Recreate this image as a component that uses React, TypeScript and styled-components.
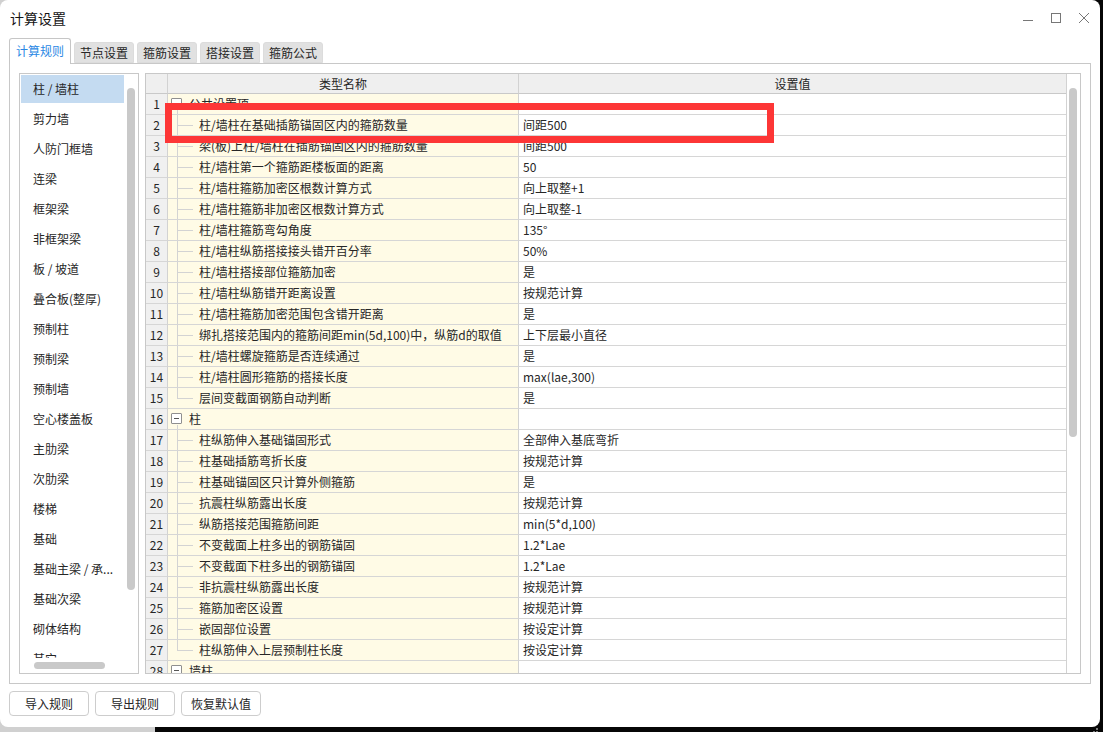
import React from "react";
import styled, { createGlobalStyle } from "styled-components";

const FONT = `"Microsoft YaHei", "Noto Sans CJK SC", "Noto Sans", sans-serif`;
const TEXT = "#262626";

const Global = createGlobalStyle`
  html, body { margin: 0; padding: 0; }
  body {
    width: 1103px;
    height: 732px;
    overflow: hidden;
    font-family: ${FONT};
    color: ${TEXT};
    background: linear-gradient(to right, #d0d0d0 0, #d0d0d0 155px, #060606 155px);
  }
`;

const Dialog = styled.div`
  position: relative;
  width: 1100px;
  height: 727px;
  background: #fff;
  border-radius: 8px;
  display: flex;
  flex-direction: column;
  box-sizing: border-box;
`;

const TitleBar = styled.div`
  height: 38px;
  display: flex;
  align-items: center;
  padding: 0 2px 2px 10px;
  box-sizing: border-box;
`;

const Title = styled.div`
  flex: 1;
  font-size: 14px;
  color: #141414;
  line-height: 20px;
`;

const WinButton = styled.div`
  width: 28px;
  height: 24px;
  display: flex;
  align-items: center;
  justify-content: center;
  color: #777;
`;

const TabRow = styled.div`
  height: 25px;
  display: flex;
  align-items: flex-end;
  gap: 3px;
  padding-left: 9px;
  position: relative;
  z-index: 1;
`;

const Tab = styled.div<{ $active?: boolean }>`
  box-sizing: border-box;
  width: ${(p) => (p.$active ? 62 : 60)}px;
  height: ${(p) => (p.$active ? 26 : 21)}px;
  margin-bottom: ${(p) => (p.$active ? -1 : 0)}px;
  display: flex;
  align-items: center;
  justify-content: center;
  font-size: 12px;
  line-height: 16px;
  border: 1px solid ${(p) => (p.$active ? "#c6c6c6" : "#dcdcdc")};
  border-bottom: ${(p) => (p.$active ? "none" : "1px solid #dcdcdc")};
  border-radius: 3px 3px 0 0;
  background: ${(p) => (p.$active ? "#fff" : "#e1e1e1")};
  color: ${(p) => (p.$active ? "#2a88e4" : TEXT)};
  padding-bottom: ${(p) => (p.$active ? 2 : 0)}px;
`;

const Panel = styled.div`
  margin: 0 9px;
  height: 621px;
  box-sizing: border-box;
  border: 1px solid #c8c8c8;
  padding: 9px;
  display: flex;
  gap: 6px;
`;

const ListBox = styled.div`
  width: 120px;
  box-sizing: border-box;
  border: 1px solid #c8c8c8;
  display: grid;
  grid-template-columns: 1fr 13px;
  grid-template-rows: 1fr 15px;
`;

const ListItems = styled.div`
  overflow: hidden;
  padding: 1px;
  display: flex;
  flex-direction: column;
  gap: 2px;
`;

const ListItem = styled.div<{ $selected?: boolean }>`
  flex: none;
  height: 28px;
  display: flex;
  align-items: center;
  padding-left: 12px;
  font-size: 12px;
  line-height: 16px;
  white-space: nowrap;
  overflow: hidden;
  color: ${TEXT};
  background: ${(p) => (p.$selected ? "#c4dbf1" : "transparent")};
`;

const VTrack = styled.div<{ $top: number; $len: number }>`
  grid-row: 1 / span 2;
  grid-column: 2;
  padding-top: ${(p) => p.$top}px;
  padding-left: 2px;
  &::after {
    content: "";
    display: block;
    width: 8px;
    height: ${(p) => p.$len}px;
    border-radius: 4px;
    background: #c9c9c9;
  }
`;

const HTrack = styled.div`
  grid-row: 2;
  grid-column: 1;
  padding: 4px 0 0 14px;
  &::after {
    content: "";
    display: block;
    width: 71px;
    height: 7px;
    border-radius: 4px;
    background: #c9c9c9;
  }
`;

const TableBox = styled.div`
  position: relative;
  flex: 1;
  box-sizing: border-box;
  border: 1px solid #c8c8c8;
  display: flex;
  overflow: hidden;
`;

const GridArea = styled.div`
  flex: 1;
  border-right: 1px solid #d2d2d2;
  overflow: hidden;
`;

const TableScroll = styled.div`
  width: 13px;
  padding: 14px 0 0 2px;
  box-sizing: border-box;
  &::after {
    content: "";
    display: block;
    width: 8px;
    height: 349px;
    border-radius: 4px;
    background: #c9c9c9;
  }
`;

const Row = styled.div`
  display: grid;
  grid-template-columns: 22px 351px 1fr;
`;

const HeadCell = styled.div<{ $last?: boolean }>`
  height: 20px;
  box-sizing: border-box;
  background: #efefef;
  border-bottom: 1px solid #c9c9c9;
  border-right: ${(p) => (p.$last ? "none" : "1px solid #d2d2d2")};
  font-size: 12px;
  line-height: 19px;
  text-align: center;
  color: ${TEXT};
`;

const NumCell = styled.div`
  height: 21px;
  box-sizing: border-box;
  background: #f0f0f0;
  border-right: 1px solid #d2d2d2;
  border-bottom: 1px solid #d6d6d6;
  font-size: 12px;
  line-height: 20px;
  text-align: center;
`;

const NameCell = styled.div`
  height: 21px;
  box-sizing: border-box;
  background: #fffbe6;
  border-right: 1px solid #d2d2d2;
  border-bottom: 1px solid #d6d6d6;
  display: flex;
  align-items: center;
  font-size: 12px;
  line-height: 20px;
  white-space: nowrap;
  overflow: hidden;
`;

const ValueCell = styled.div`
  height: 21px;
  box-sizing: border-box;
  border-bottom: 1px solid #d6d6d6;
  padding-left: 4px;
  font-size: 12px;
  line-height: 20px;
  white-space: nowrap;
  overflow: hidden;
`;

const Connector = styled.span<{ $last?: boolean }>`
  position: relative;
  flex: none;
  width: 31px;
  height: 20px;
  align-self: flex-start;
  &::before {
    content: "";
    position: absolute;
    left: 9px;
    top: 0;
    width: 1px;
    height: ${(p) => (p.$last ? "11px" : "21px")};
    background: #d3d3d3;
  }
  &::after {
    content: "";
    position: absolute;
    left: 9px;
    top: 10px;
    width: 16px;
    height: 1px;
    background: #d3d3d3;
  }
`;

const ToggleWrap = styled.span`
  position: relative;
  flex: none;
  width: 21px;
  height: 20px;
  align-self: flex-start;
  &::after {
    content: "";
    position: absolute;
    left: 9px;
    top: 16px;
    width: 1px;
    height: 5px;
    background: #d3d3d3;
  }
`;

const ToggleBox = styled.span`
  position: absolute;
  left: 3px;
  top: 4px;
  width: 11px;
  height: 11px;
  box-sizing: border-box;
  border: 1px solid #8f8f8f;
  background: #fff;
  border-radius: 1px;
  &::after {
    content: "";
    position: absolute;
    left: 2px;
    top: 4px;
    width: 5px;
    height: 1px;
    background: #555;
  }
`;

const Highlight = styled.div`
  position: absolute;
  left: 19px;
  top: 29px;
  width: 609px;
  height: 40px;
  box-sizing: border-box;
  border: 7px solid #fd3636;
  pointer-events: none;
`;

const Footer = styled.div`
  display: flex;
  gap: 6px;
  padding: 7px 0 0 9px;
`;

const Button = styled.div`
  width: 80px;
  height: 25px;
  box-sizing: border-box;
  border: 1px solid #cdcdcd;
  border-radius: 4px;
  background: #fff;
  display: flex;
  align-items: center;
  justify-content: center;
  font-size: 12px;
  line-height: 16px;
  color: ${TEXT};
`;

const Grip = styled.div`
  position: absolute;
  right: 2px;
  bottom: 2px;
  width: 8px;
  height: 8px;
`;

type Item = { n: number; name: string; value?: string; group?: boolean; last?: boolean };

const rows: Item[] = [
  { n: 1, name: "公共设置项", group: true },
  { n: 2, name: "柱/墙柱在基础插筋锚固区内的箍筋数量", value: "间距500" },
  { n: 3, name: "梁(板)上柱/墙柱在插筋锚固区内的箍筋数量", value: "间距500" },
  { n: 4, name: "柱/墙柱第一个箍筋距楼板面的距离", value: "50" },
  { n: 5, name: "柱/墙柱箍筋加密区根数计算方式", value: "向上取整+1" },
  { n: 6, name: "柱/墙柱箍筋非加密区根数计算方式", value: "向上取整-1" },
  { n: 7, name: "柱/墙柱箍筋弯勾角度", value: "135°" },
  { n: 8, name: "柱/墙柱纵筋搭接接头错开百分率", value: "50%" },
  { n: 9, name: "柱/墙柱搭接部位箍筋加密", value: "是" },
  { n: 10, name: "柱/墙柱纵筋错开距离设置", value: "按规范计算" },
  { n: 11, name: "柱/墙柱箍筋加密范围包含错开距离", value: "是" },
  { n: 12, name: "绑扎搭接范围内的箍筋间距min(5d,100)中，纵筋d的取值", value: "上下层最小直径" },
  { n: 13, name: "柱/墙柱螺旋箍筋是否连续通过", value: "是" },
  { n: 14, name: "柱/墙柱圆形箍筋的搭接长度", value: "max(lae,300)" },
  { n: 15, name: "层间变截面钢筋自动判断", value: "是", last: true },
  { n: 16, name: "柱", group: true },
  { n: 17, name: "柱纵筋伸入基础锚固形式", value: "全部伸入基底弯折" },
  { n: 18, name: "柱基础插筋弯折长度", value: "按规范计算" },
  { n: 19, name: "柱基础锚固区只计算外侧箍筋", value: "是" },
  { n: 20, name: "抗震柱纵筋露出长度", value: "按规范计算" },
  { n: 21, name: "纵筋搭接范围箍筋间距", value: "min(5*d,100)" },
  { n: 22, name: "不变截面上柱多出的钢筋锚固", value: "1.2*Lae" },
  { n: 23, name: "不变截面下柱多出的钢筋锚固", value: "1.2*Lae" },
  { n: 24, name: "非抗震柱纵筋露出长度", value: "按规范计算" },
  { n: 25, name: "箍筋加密区设置", value: "按规范计算" },
  { n: 26, name: "嵌固部位设置", value: "按设定计算" },
  { n: 27, name: "柱纵筋伸入上层预制柱长度", value: "按设定计算", last: true },
  { n: 28, name: "墙柱", group: true },
];

const listItems = [
  "柱 / 墙柱",
  "剪力墙",
  "人防门框墙",
  "连梁",
  "框架梁",
  "非框架梁",
  "板 / 坡道",
  "叠合板(整厚)",
  "预制柱",
  "预制梁",
  "预制墙",
  "空心楼盖板",
  "主肋梁",
  "次肋梁",
  "楼梯",
  "基础",
  "基础主梁 / 承...",
  "基础次梁",
  "砌体结构",
  "其它",
];

const tabs = ["计算规则", "节点设置", "箍筋设置", "搭接设置", "箍筋公式"];

export default function App() {
  return (
    <>
      <Global />
      <Dialog>
        <TitleBar>
          <Title>计算设置</Title>
          <WinButton>
            <svg width="12" height="12" viewBox="0 0 12 12">
              <line x1="1" y1="8.5" x2="11" y2="8.5" stroke="currentColor" strokeWidth="1" />
            </svg>
          </WinButton>
          <WinButton>
            <svg width="12" height="12" viewBox="0 0 12 12">
              <rect x="1.5" y="1.5" width="9" height="9" fill="none" stroke="currentColor" strokeWidth="1" />
            </svg>
          </WinButton>
          <WinButton>
            <svg width="12" height="12" viewBox="0 0 12 12">
              <path d="M1 1 L11 11 M11 1 L1 11" stroke="currentColor" strokeWidth="1" />
            </svg>
          </WinButton>
        </TitleBar>
        <TabRow>
          {tabs.map((t, i) => (
            <Tab key={t} $active={i === 0}>
              {t}
            </Tab>
          ))}
        </TabRow>
        <Panel>
          <ListBox>
            <ListItems>
              {listItems.map((t, i) => (
                <ListItem key={t} $selected={i === 0}>
                  {t}
                </ListItem>
              ))}
            </ListItems>
            <VTrack $top={14} $len={502} />
            <HTrack />
          </ListBox>
          <TableBox>
            <GridArea>
              <Row>
                <HeadCell />
                <HeadCell>类型名称</HeadCell>
                <HeadCell $last>设置值</HeadCell>
              </Row>
              {rows.map((r) => (
                <Row key={r.n}>
                  <NumCell>{r.n}</NumCell>
                  <NameCell>
                    {r.group ? (
                      <ToggleWrap>
                        <ToggleBox />
                      </ToggleWrap>
                    ) : (
                      <Connector $last={r.last} />
                    )}
                    {r.name}
                  </NameCell>
                  <ValueCell>{r.value ?? ""}</ValueCell>
                </Row>
              ))}
            </GridArea>
            <TableScroll />
            <Highlight />
          </TableBox>
        </Panel>
        <Footer>
          <Button>导入规则</Button>
          <Button>导出规则</Button>
          <Button>恢复默认值</Button>
        </Footer>
        <Grip>
          <svg width="8" height="8" viewBox="0 0 8 8">
            <g fill="#7a7a7a">
              <rect x="6" y="0" width="2" height="2" />
              <rect x="3" y="3" width="2" height="2" />
              <rect x="6" y="3" width="2" height="2" />
              <rect x="0" y="6" width="2" height="2" />
              <rect x="3" y="6" width="2" height="2" />
              <rect x="6" y="6" width="2" height="2" />
            </g>
          </svg>
        </Grip>
      </Dialog>
    </>
  );
}
